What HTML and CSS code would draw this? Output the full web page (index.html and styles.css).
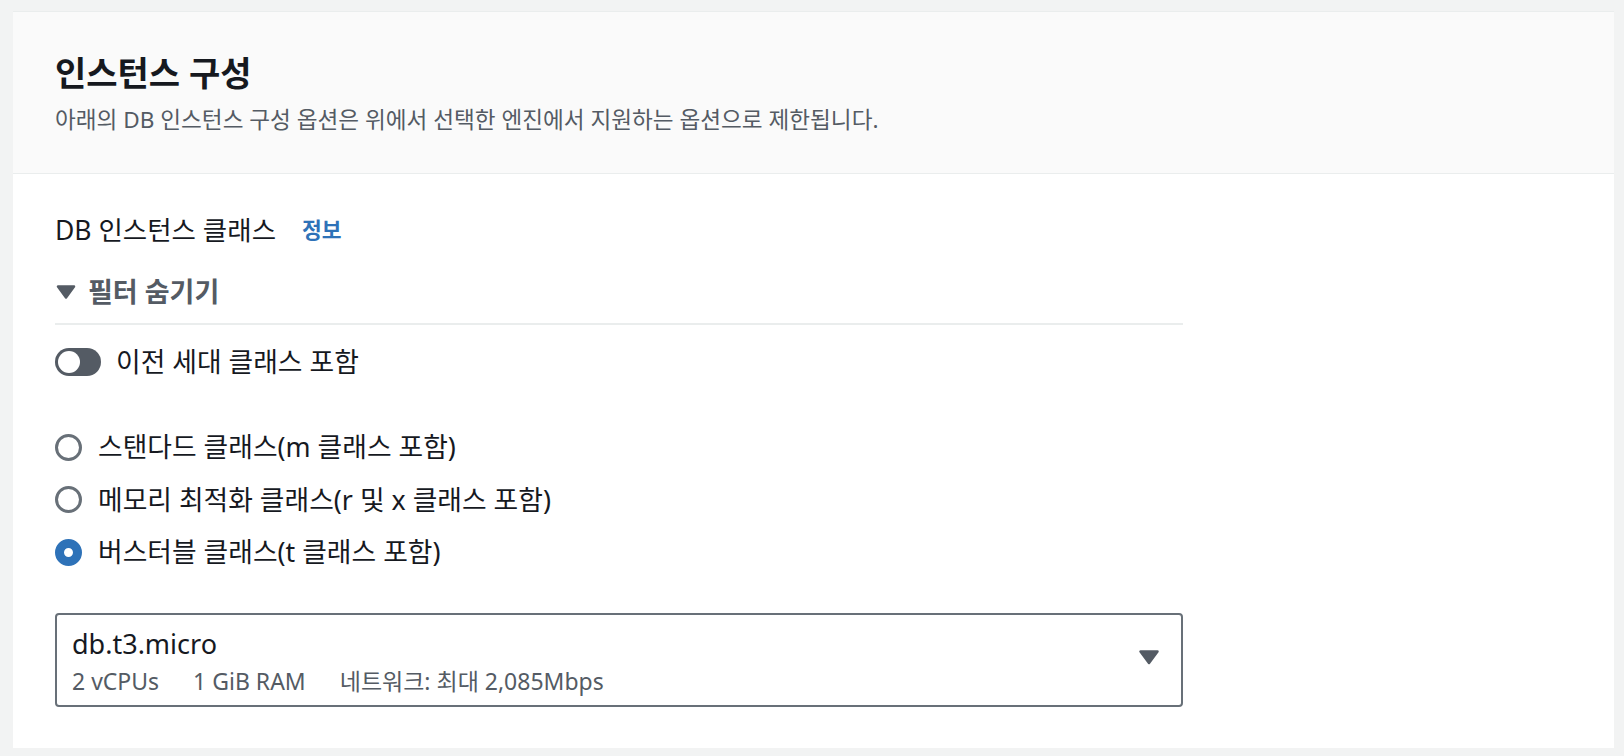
FILE: index.html
```html
<!DOCTYPE html>
<html lang="ko">
<head>
<meta charset="utf-8">
<title>인스턴스 구성</title>
<link rel="stylesheet" href="styles.css">
</head>
<body>
<section class="card">
  <header class="card-header">
    <h1 class="title">인스턴스 구성</h1>
    <p class="desc">아래의 DB 인스턴스 구성 옵션은 위에서 선택한 엔진에서 지원하는 옵션으로 제한됩니다.</p>
  </header>
  <div class="card-body">
    <div class="col">
      <div class="label-row">
        <span class="label">DB 인스턴스 클래스</span>
        <a class="info">정보</a>
      </div>
      <div class="filter-row">
        <svg class="caret" width="20" height="16" viewBox="0 0 20 16"><path d="M2 2.5 H18 L10 13.5 Z" fill="#545b64" stroke="#545b64" stroke-width="2.5" stroke-linejoin="round"/></svg>
        <span class="filter-text">필터 숨기기</span>
      </div>
      <div class="divider"></div>
      <div class="toggle-row">
        <span class="toggle"><span class="knob"></span></span>
        <span class="opt-text">이전 세대 클래스 포함</span>
      </div>
      <div class="radios">
        <div class="radio-row"><span class="radio"></span><span class="opt-text">스탠다드 클래스(m 클래스 포함)</span></div>
        <div class="radio-row"><span class="radio"></span><span class="opt-text">메모리 최적화 클래스(r 및 x 클래스 포함)</span></div>
        <div class="radio-row"><span class="radio checked"></span><span class="opt-text">버스터블 클래스(t 클래스 포함)</span></div>
      </div>
      <div class="select">
        <div class="select-main">
          <div class="value">db.t3.micro</div>
          <div class="tags"><span>2 vCPUs</span><span>1 GiB RAM</span><span>네트워크: 최대 2,085Mbps</span></div>
        </div>
        <svg class="select-caret" width="22" height="17" viewBox="0 0 22 17"><path d="M2.5 2.5 H19.5 L11 14 Z" fill="#545b64" stroke="#545b64" stroke-width="2.5" stroke-linejoin="round"/></svg>
      </div>
    </div>
  </div>
</section>
</body>
</html>
```
FILE: styles.css
```css
* { box-sizing: border-box; }
html, body { background: #f2f3f3; }
body {
  margin: 11px 10px 8px 13px;
  font-family: "Noto Sans", "Noto Sans CJK KR", sans-serif;
  color: #16191f;
}
.card {
  background: #ffffff;
  border-top: 1px solid #eaeded;
  box-shadow: 0 1px 1px 0 rgba(0,28,36,.3), 1px 1px 1px 0 rgba(0,28,36,.15), -1px 1px 1px 0 rgba(0,28,36,.15);
  height: 737px;
}
.card-header {
  background: #fafafa;
  border-bottom: 1px solid #eaeded;
  padding: 42px 42px 38px;
}
.title {
  margin: 0;
  font-size: 34px;
  line-height: 38px;
  font-weight: 700;
  color: #16191f;
}
.desc {
  margin: 13px 0 0;
  font-size: 22.6px;
  line-height: 30px;
  color: #545b64;
}
.card-body {
  padding: 39px 42px 41px;
}
.col {
  width: 1128px;
  display: flex;
  flex-direction: column;
}
.label-row {
  display: flex;
  align-items: center;
  height: 34px;
}
.label {
  font-size: 26.5px;
  line-height: 34px;
}
.info {
  margin-left: 26px;
  font-size: 21.5px;
  font-weight: 700;
  color: #2e72b8;
  line-height: 34px;
}
.filter-row {
  margin-top: 28px;
  height: 34px;
  display: flex;
  align-items: center;
}
.caret { margin-left: 1px; margin-right: 12px; }
.filter-text {
  font-size: 27px;
  line-height: 34px;
  font-weight: 700;
  color: #545b64;
}
.divider {
  margin-top: 14px;
  height: 2px;
  background: #eaeded;
}
.toggle-row {
  margin-top: 20px;
  height: 34px;
  display: flex;
  align-items: center;
}
.toggle {
  width: 46px;
  height: 28px;
  border-radius: 14px;
  background: #545b64;
  position: relative;
  margin-right: 15px;
  flex: none;
}
.knob {
  position: absolute;
  left: 3px;
  top: 3px;
  width: 22px;
  height: 22px;
  border-radius: 50%;
  background: #ffffff;
}
.opt-text {
  font-size: 26.8px;
  line-height: 34px;
  color: #16191f;
}
.radios {
  margin-top: 51px;
  display: flex;
  flex-direction: column;
  gap: 18.5px;
}
.radio-row {
  height: 34px;
  display: flex;
  align-items: center;
}
.radio {
  width: 27px;
  height: 27px;
  border-radius: 50%;
  border: 3px solid #687078;
  background: #ffffff;
  margin-right: 16px;
  flex: none;
}
.radio.checked {
  border: 9px solid #2e72b8;
}
.select {
  margin-top: 44px;
  height: 94px;
  border: 2px solid #687078;
  border-radius: 4px;
  display: flex;
  align-items: center;
  padding: 0 21px 0 15px;
}
.select-main {
  flex: 1;
  display: flex;
  flex-direction: column;
  padding-top: 2px;
}
.value {
  font-size: 27px;
  line-height: 34px;
  color: #16191f;
}
.tags {
  margin-top: 5px;
  display: flex;
  gap: 34px;
  font-size: 23px;
  line-height: 30px;
  color: #545b64;
}
.select-caret { flex: none; margin-bottom: 5px; }
```
